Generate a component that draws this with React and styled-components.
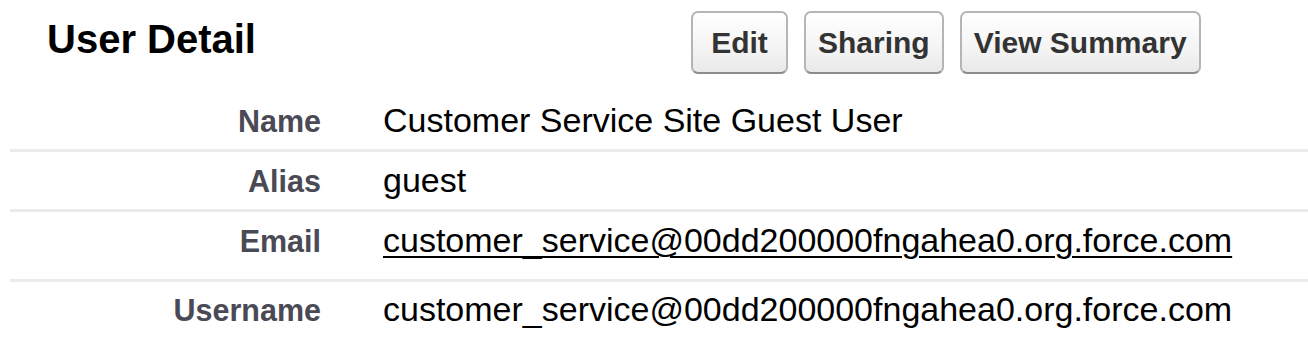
import React from "react";
import styled, { createGlobalStyle } from "styled-components";

const GlobalStyle = createGlobalStyle`
  body {
    margin: 0;
    background: #ffffff;
    font-family: "Liberation Sans", Arial, sans-serif;
  }
`;

const Page = styled.div`
  width: 1308px;
  height: 344px;
  overflow: hidden;
  background: #ffffff;
`;

const Header = styled.div`
  display: grid;
  grid-template-columns: 644px auto;
  align-items: start;
  height: 88px;
  padding-left: 47px;
`;

const Title = styled.h2`
  margin: 0;
  padding-top: 17px;
  font-size: 40px;
  font-weight: bold;
  color: #000;
`;

const ButtonBar = styled.div`
  display: flex;
  gap: 16px;
  padding-top: 11px;
`;

const Button = styled.button`
  box-sizing: border-box;
  height: 63px;
  min-width: 97px;
  padding: 0 12px;
  font-family: "Liberation Sans", Arial, sans-serif;
  font-size: 30px;
  font-weight: bold;
  color: #333;
  background: linear-gradient(#ffffff, #f4f4f4 60%, #e9e9e9);
  border: 2.5px solid #b5b5b5;
  border-bottom-color: #8c8c8c;
  border-radius: 7px;
  cursor: pointer;
`;

const DetailList = styled.div`
  margin-left: 10px;
`;

const Row = styled.div`
  display: grid;
  grid-template-columns: 311px 1fr;
  column-gap: 62px;
  align-items: baseline;
  height: ${(p) => p.$height}px;
  box-sizing: border-box;
  padding-top: ${(p) => p.$top}px;
  border-bottom: ${(p) => (p.$last ? "none" : "3px solid #ebebeb")};
`;

const Label = styled.div`
  text-align: right;
  font-size: 30.5px;
  font-weight: bold;
  color: #4a4a56;
`;

const Value = styled.div`
  font-size: 34px;
  color: #000;
  white-space: nowrap;
`;

const Link = styled.a`
  color: #000;
  text-decoration: underline;
  text-underline-offset: 4px;
  text-decoration-thickness: 2px;
`;

const rows = [
  { label: "Name", value: "Customer Service Site Guest User", height: 64, top: 13 },
  { label: "Alias", value: "guest", height: 60, top: 9 },
  {
    label: "Email",
    value: "customer_service@00dd200000fngahea0.org.force.com",
    link: true,
    height: 70,
    top: 9,
  },
  {
    label: "Username",
    value: "customer_service@00dd200000fngahea0.org.force.com",
    height: 62,
    top: 8,
    last: true,
  },
];

export default function App() {
  return (
    <Page>
      <GlobalStyle />
      <Header>
        <Title>User Detail</Title>
        <ButtonBar>
          <Button>Edit</Button>
          <Button>Sharing</Button>
          <Button>View Summary</Button>
        </ButtonBar>
      </Header>
      <DetailList>
        {rows.map((r) => (
          <Row key={r.label} $height={r.height} $top={r.top} $last={r.last}>
            <Label>{r.label}</Label>
            <Value>{r.link ? <Link href="#">{r.value}</Link> : r.value}</Value>
          </Row>
        ))}
      </DetailList>
    </Page>
  );
}
